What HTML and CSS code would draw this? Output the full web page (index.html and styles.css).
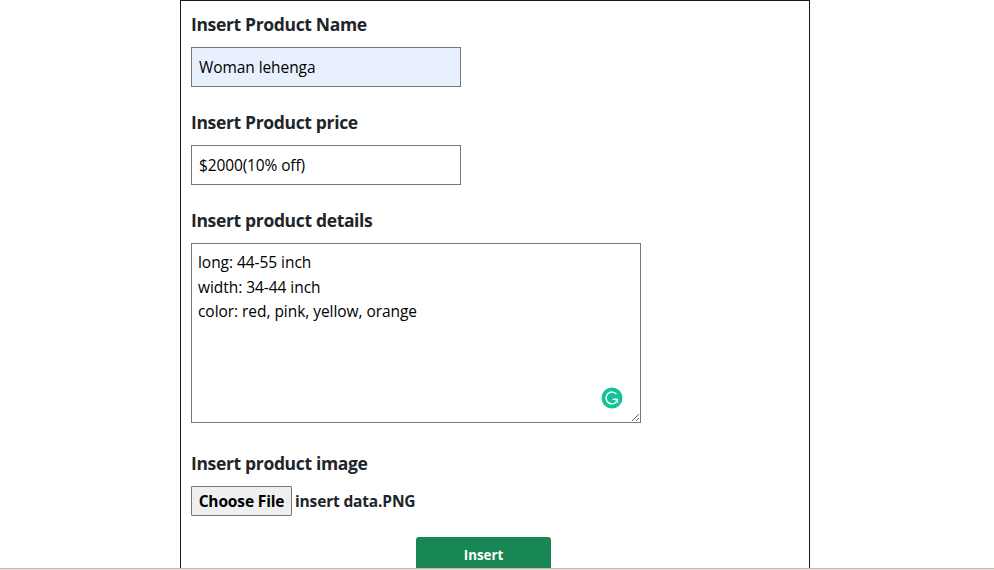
FILE: index.html
```html
<!DOCTYPE html>
<html lang="en">
<head>
<meta charset="utf-8">
<title>Insert Product</title>
<link rel="stylesheet" href="styles.css">
</head>
<body>
<main class="viewport">
<form class="product-form">
  <label class="label" for="name"><span>Insert Product Name</span></label>
  <input class="field autofilled" id="name" type="text" value="Woman lehenga">
  <label class="label" for="price"><span>Insert Product price</span></label>
  <input class="field price" id="price" type="text" value="$2000(10% off)">
  <label class="label" for="details"><span>Insert product details</span></label>
  <div class="details-wrap">
    <textarea class="details" id="details" spellcheck="false">long: 44-55 inch
width: 34-44 inch
color: red, pink, yellow, orange</textarea>
    <svg class="checker" viewBox="0 0 22 22" aria-hidden="true">
      <circle cx="11" cy="11" r="10.5" fill="#15c39a"/>
      <path d="M15.4 7.1A5.9 5.9 0 1 0 15.6 14.6M11.6 12.4H16" fill="none" stroke="#fff" stroke-width="1.4"/>
      <path d="M13 11.7h4.1v4.9z" fill="#fff"/>
    </svg>
  </div>
  <label class="label image-label"><span>Insert product image</span></label>
  <div class="file-row">
    <button class="choose" type="button">Choose File</button>
    <span class="filename">insert data.PNG</span>
  </div>
  <button class="submit" type="button">Insert</button>
</form>
</main>
<footer class="edge"></footer>
</body>
</html>
```
FILE: styles.css
```css
* { box-sizing: border-box; }
body {
  margin: 0;
  height: 570px;
  overflow: hidden;
  background: #fff;
  color: #212529;
  font-family: "Open Sans", "Noto Sans", sans-serif;
  font-size: 16px;
}
.viewport { height: 568px; overflow: hidden; }
.product-form {
  display: flex;
  flex-direction: column;
  align-items: flex-start;
  width: 630px;
  height: 600px;
  margin-left: 180px;
  padding: 10px;
  border: 1px solid #16181b;
}
.label {
  height: 28px;
  margin-bottom: 8px;
  font-size: 17.5px;
  line-height: 27px;
  font-weight: 700;
  letter-spacing: -0.34px;
  white-space: nowrap;
}
.field {
  width: 270px;
  height: 40px;
  margin: 0 0 22px;
  padding: 1px 7px;
  border: 1px solid #767676;
  border-radius: 0;
  background: #fff;
  color: #000;
  font: 15.5px "Open Sans", sans-serif;
  letter-spacing: -0.08px;
}
.price { letter-spacing: -0.13px; }
.autofilled { background: #e8f0fe; }
.details-wrap { position: relative; height: 180px; margin-bottom: 27px; }
.details {
  display: block;
  width: 450px;
  height: 180px;
  padding: 6px;
  border: 1px solid #767676;
  border-radius: 0;
  outline: 0;
  overflow: hidden;
  resize: both;
  color: #000;
  font: 15.5px/24.5px "Open Sans", sans-serif;
  letter-spacing: -0.05px;
}
.checker { position: absolute; left: 410px; top: 143.5px; width: 22px; height: 22px; }
.file-row { display: flex; align-items: center; gap: 3px; height: 30px; margin-bottom: 21px; }
.choose {
  width: 101px;
  height: 30px;
  padding: 0;
  border: 1px solid #767676;
  border-radius: 1px;
  background: #efefef;
  color: #000;
  font: 700 15.5px "Open Sans", sans-serif;
  letter-spacing: -0.14px;
  white-space: nowrap;
}
.filename { font-size: 15.5px; font-weight: 700; letter-spacing: -0.16px; white-space: nowrap; }
.submit {
  width: 135px;
  height: 38px;
  margin-left: 225px;
  padding: 0 0 2px;
  border: 0;
  border-radius: 3px;
  background: #198754;
  color: #fff;
  font: 700 13.3px/34px "Open Sans", sans-serif;
}
.edge { height: 2px; background: #f0e4de; border-top: 1px solid #c9b3ab; }
```
